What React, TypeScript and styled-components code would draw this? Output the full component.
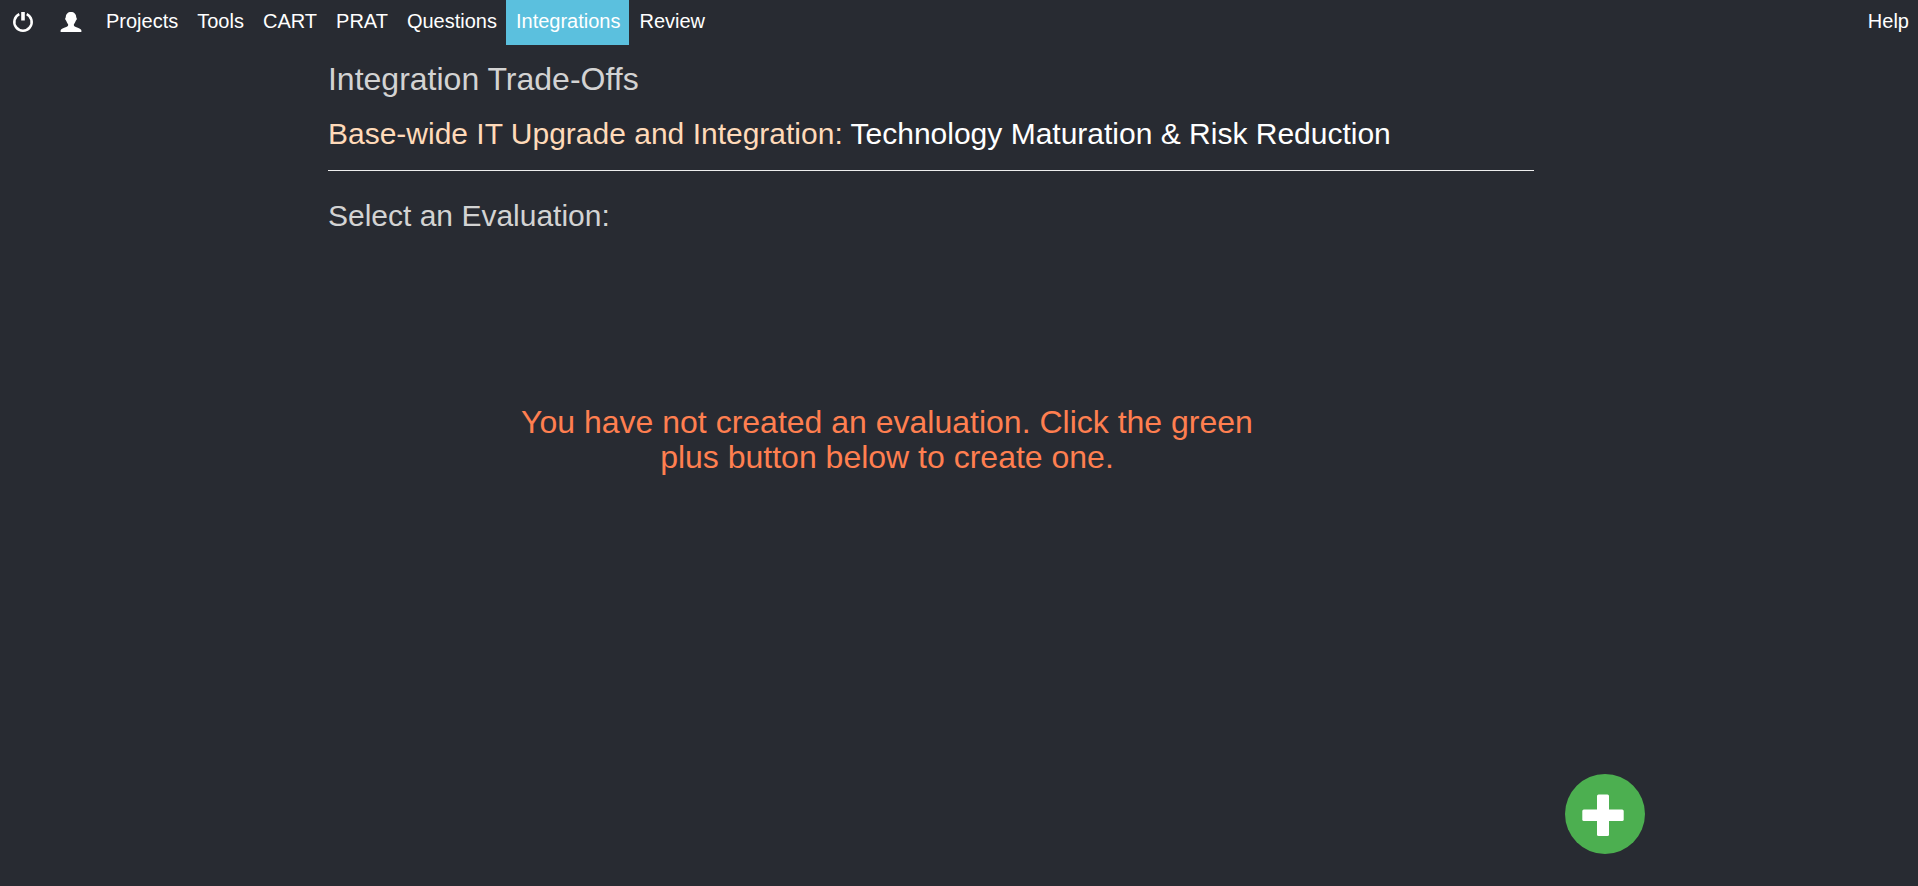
import React from "react";
import styled, { createGlobalStyle } from "styled-components";

const GlobalStyle = createGlobalStyle`
  *, *::before, *::after { box-sizing: border-box; }
  body {
    margin: 0;
    background: #282b32;
    color: #fff;
    font-family: "Liberation Sans", Arial, sans-serif;
  }
`;

const Page = styled.div`
  min-height: 100vh;
`;

const NavBar = styled.nav`
  display: flex;
  justify-content: space-between;
  height: 45px;
`;

const NavGroup = styled.div`
  display: flex;
`;

const NavLink = styled.a<{ $active?: boolean }>`
  display: flex;
  align-items: center;
  padding: 0 9px 4px 10px;
  font-size: 20px;
  line-height: 22px;
  color: #fff;
  text-decoration: none;
  background: ${({ $active }) => ($active ? "#5bc0de" : "transparent")};
`;

const IconLink = styled(NavLink)`
  justify-content: center;
  width: 48px;
  padding: 0 2px 2px 0;
`;

const Content = styled.main`
  margin: 0 20% 0 17.1%;
`;

const Title = styled.h1`
  margin: 16px 0 19px;
  font-size: 32px;
  line-height: 36px;
  font-weight: 400;
  color: #d3d3d3;
`;

const Heading = styled.h2<{ $muted?: boolean }>`
  margin: 0;
  font-size: 30px;
  line-height: 36px;
  font-weight: 400;
  color: ${({ $muted }) => ($muted ? "#d3d3d3" : "#fff")};
`;

const ProjectName = styled.span`
  color: #ffdab9;
`;

const Divider = styled.hr`
  margin: 18px 0 27px;
  border: 0;
  border-top: 1px solid #eee;
`;

const EmptyMessage = styled.p`
  width: 750px;
  max-width: 100%;
  margin: 171px auto 0 184px;
  font-size: 32px;
  line-height: 35px;
  text-align: center;
  color: #ff7f50;
`;

const AddButton = styled.button`
  position: fixed;
  right: 273px;
  bottom: 32px;
  display: flex;
  width: 80px;
  height: 80px;
  padding: 0;
  border: 0;
  border-radius: 50%;
  background: #4caf50;
  cursor: pointer;
`;

const PowerIcon = () => (
  <svg width="22" height="22" viewBox="0 0 22 22" fill="none" stroke="#fff" aria-hidden="true">
    <path d="M7.3 3.1A8.7 8.7 0 1 0 14.7 3.1" strokeWidth="2.5" />
    <path d="M11 1V9.5" strokeWidth="3.6" strokeLinecap="butt" />
  </svg>
);

const UserIcon = () => (
  <svg width="22" height="22" viewBox="0 0 22 22" fill="#fff" aria-hidden="true">
    <path d="M11 1C14.1 1 16.2 3.1 16.2 6.1C16.2 6.7 16.9 6.9 16.8 8C16.7 9 16 9.3 15.7 10C15.2 11.6 14.3 12.5 13.9 13.2C13.6 14.8 14.3 15.3 15.8 15.9C18.6 17 20.8 17.7 21.3 19C21.5 20 21.5 20.6 21.3 21H.7C.5 20.6.5 20 .7 19C1.2 17.7 3.4 17 6.2 15.9C7.7 15.3 8.4 14.8 8.1 13.2C7.7 12.5 6.8 11.6 6.3 10C6 9.3 5.3 9 5.2 8C5.1 6.9 5.8 6.7 5.8 6.1C5.8 3.1 7.9 1 11 1Z" />
  </svg>
);

const PlusIcon = () => (
  <svg width="80" height="80" viewBox="0 0 80 80" fill="#fff" aria-hidden="true">
    <rect x="32" y="20.5" width="12" height="41.5" rx="1.5" />
    <rect x="17.3" y="35.5" width="41.4" height="11.5" rx="1.5" />
  </svg>
);

const links = ["Projects", "Tools", "CART", "PRAT", "Questions", "Integrations", "Review"];

export default function App() {
  return (
    <Page>
      <GlobalStyle />
      <NavBar aria-label="Main">
        <NavGroup>
          <IconLink href="#logout" aria-label="Log out">
            <PowerIcon />
          </IconLink>
          <IconLink href="#profile" aria-label="Profile">
            <UserIcon />
          </IconLink>
          {links.map((label) => (
            <NavLink
              key={label}
              href={`#${label.toLowerCase()}`}
              $active={label === "Integrations"}
              aria-current={label === "Integrations" ? "page" : undefined}
            >
              {label}
            </NavLink>
          ))}
        </NavGroup>
        <NavLink href="#help">Help</NavLink>
      </NavBar>
      <Content>
        <Title>Integration Trade-Offs</Title>
        <Heading>
          <ProjectName>Base-wide IT Upgrade and Integration:</ProjectName> Technology Maturation &amp; Risk
          Reduction
        </Heading>
        <Divider />
        <Heading $muted>Select an Evaluation:</Heading>
        <EmptyMessage>
          You have not created an evaluation. Click the green plus button below to create one.
        </EmptyMessage>
      </Content>
      <AddButton type="button" aria-label="Create evaluation">
        <PlusIcon />
      </AddButton>
    </Page>
  );
}
